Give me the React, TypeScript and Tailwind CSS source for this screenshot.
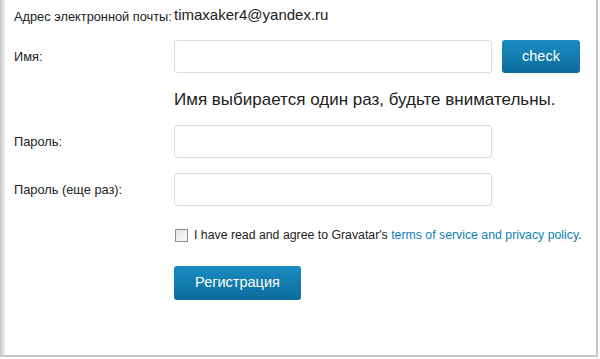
import React from "react";

export default function App() {
  const font = { fontFamily: '"Liberation Sans", Arial, sans-serif' };
  return (
    <div className="w-[600px] h-[359px] bg-white overflow-hidden" style={font}>
      <div className="w-[598px] h-[357px] flex border-b-2 border-[#c8c8c8]">
        <div className="w-[5px] h-full bg-gradient-to-r from-[#c4c4c4] to-[#f2f2f2]" />
        <div className="flex-1 relative pl-[9px] pt-[5px]">
          <div className="flex flex-col">
            {/* email row */}
            <div className="flex items-center h-[20px]">
              <div className="w-[160px] text-[12.8px] text-[#222] pt-[4px] whitespace-nowrap">Адрес электронной почты:</div>
              <div className="text-[15px] text-[#222]">timaxaker4@yandex.ru</div>
            </div>
            {/* name row */}
            <div className="flex items-center mt-[15px] h-[33px]">
              <div className="w-[160px] text-[12.8px] text-[#222]">Имя:</div>
              <div className="w-[318px] h-[33px] border border-[#dcdcdc] rounded-[3px] bg-white" />
              <button className="ml-[10px] w-[78px] h-[33px] rounded-[3px] bg-gradient-to-b from-[#1b8cc0] to-[#0a6c9c] text-white text-[14.5px]">
                check
              </button>
            </div>
            <div className="ml-[160px] mt-[17px] text-[17px] text-[#222] h-[20px] leading-[20px] whitespace-nowrap">
              Имя выбирается один раз, будьте внимательны.
            </div>
            <div className="flex items-center mt-[15px] h-[33px]">
              <div className="w-[160px] text-[12.8px] text-[#222]">Пароль:</div>
              <div className="w-[318px] h-[33px] border border-[#dcdcdc] rounded-[3px] bg-white" />
            </div>
            <div className="flex items-center mt-[15px] h-[33px]">
              <div className="w-[160px] text-[12.8px] text-[#222]">Пароль (еще раз):</div>
              <div className="w-[318px] h-[33px] border border-[#dcdcdc] rounded-[3px] bg-white" />
            </div>
            <div className="flex items-center ml-[161px] mt-[21px] h-[16px]">
              <div className="w-[13px] h-[13px] border border-[#8f8f8f] bg-gradient-to-br from-[#e4e4e4] to-[#fafafa]" />
              <div className="ml-[6px] text-[12.3px] text-[#222] whitespace-nowrap">
                I have read and agree to Gravatar's{" "}
                <span className="text-[#0f7fb5]">terms of service and privacy policy</span>.
              </div>
            </div>
            <div className="ml-[160px] mt-[23px]">
              <button className="w-[127px] h-[34px] rounded-[3px] bg-gradient-to-b from-[#1b8cc0] to-[#0a6c9c] text-white text-[14.5px]">
                Регистрация
              </button>
            </div>
          </div>
        </div>
        <div className="w-[2px] h-full bg-[#c8c8c8]" />
      </div>
    </div>
  );
}
